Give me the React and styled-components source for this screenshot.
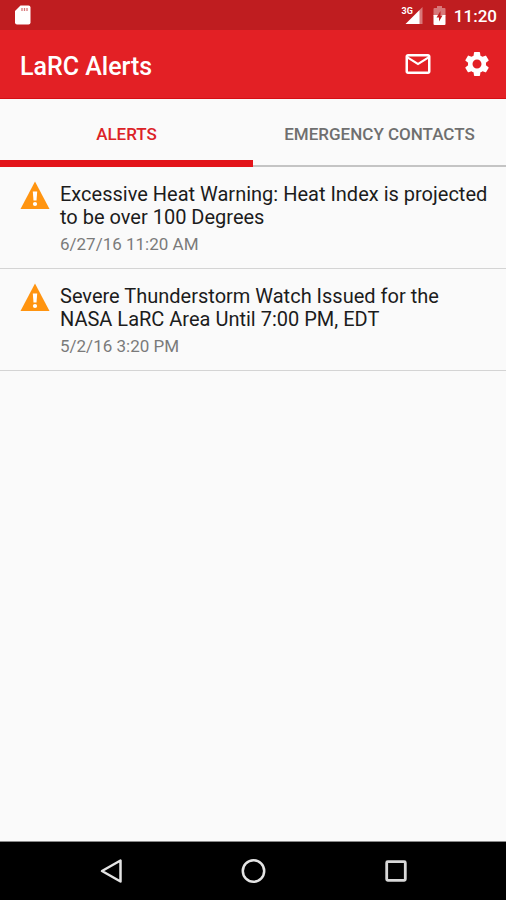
import React, { useState } from "react";
import styled, { createGlobalStyle } from "styled-components";
import { MdMailOutline, MdSettings } from "react-icons/md";

const GlobalStyle = createGlobalStyle`
  * {
    box-sizing: border-box;
  }
  body {
    margin: 0;
    background: #fafafa;
    font-family: Roboto, "Liberation Sans", sans-serif;
  }
  button {
    padding: 0;
    border: 0;
    background: none;
    font-family: inherit;
    cursor: pointer;
  }
  svg {
    display: block;
  }
`;

const Screen = styled.div`
  display: flex;
  flex-direction: column;
  min-height: 100vh;
`;

const StatusBar = styled.div`
  display: flex;
  align-items: center;
  justify-content: space-between;
  height: 30px;
  padding: 0 9px 0 14px;
  background: #bf1d20;
  color: #fff;
`;

const StatusIcons = styled.div`
  display: flex;
  align-items: center;
`;

const Clock = styled.span`
  margin-left: 8px;
  padding-top: 2px;
  font-size: 17px;
  font-weight: 500;
  line-height: 22px;
`;

const Network = styled.div`
  display: flex;
  align-items: flex-start;
  margin-right: 10px;
  span {
    margin-right: -8px;
    font-size: 9px;
    font-weight: 700;
    line-height: 10px;
  }
`;

const AppBar = styled.header`
  display: flex;
  align-items: center;
  justify-content: space-between;
  height: 69px;
  padding: 0 14px 0 20px;
  border-bottom: 1px solid #d50f14;
  background: #e32025;
  color: #fff;
  h1 {
    margin: 0;
    padding-top: 5px;
    font-size: 25px;
    font-weight: 500;
    line-height: 28px;
  }
`;

const Actions = styled.div`
  display: flex;
  gap: 29px;
`;

const IconButton = styled.button`
  color: #fff;
  font-size: 30px;
`;

const Tabs = styled.div`
  display: flex;
  height: 68px;
  box-shadow: inset 0 -2px #c4c4c4;
`;

const Tab = styled.button`
  flex: 1 1 0;
  padding-top: 8px;
  border-bottom: 7px solid ${(props) => (props.$active ? "#e3141a" : "transparent")};
  color: ${(props) => (props.$active ? "#dc2227" : "#6f6f6f")};
  font-size: 17px;
  font-weight: 500;
  line-height: 20px;
`;

const List = styled.ul`
  flex: 1;
  margin: 0;
  padding: 0;
  list-style: none;
`;

const Item = styled.li`
  display: flex;
  gap: 10px;
  padding: 14px 12px 13px 20px;
  border-bottom: 1px solid #d4d4d4;
  svg {
    flex: none;
  }
  h2 {
    margin: 2px 0 4px;
    color: #1c1c1c;
    font-size: 20px;
    font-weight: 400;
    line-height: 23px;
  }
  time {
    display: block;
    color: #7a7a7a;
    font-size: 17px;
    line-height: 22px;
  }
`;

const NavBar = styled.nav`
  display: flex;
  justify-content: center;
  gap: 112px;
  height: 59px;
  border-top: 1px solid #8a8a8a;
  background: #000;
`;

const NavButton = styled.button`
  width: 30px;
`;

const alerts = [
  {
    title: "Excessive Heat Warning: Heat Index is projected to be over 100 Degrees",
    date: "6/27/16 11:20 AM",
  },
  {
    title: "Severe Thunderstorm Watch Issued for the NASA LaRC Area Until 7:00 PM, EDT",
    date: "5/2/16 3:20 PM",
  },
];

function SdCardIcon() {
  return (
    <svg width="17" height="20" viewBox="0 0 17 20">
      <path
        d="M6.5 .5H14.500Q16.500 .5 16.500 2.500V17.500Q16.500 19.500 14.500 19.500H3Q1 19.500 1 17.500V6Z"
        fill="#fff"
      />
      <path d="M8 3v3M10.500 3v3M13 3v3" stroke="#bf1d20" strokeWidth="1.300" opacity="0.6" />
    </svg>
  );
}

function SignalIcon() {
  return (
    <svg width="18" height="18" viewBox="0 0 18 18">
      <path d="M17.500 1V18H14V4.500Z" fill="#fff" opacity="0.4" />
      <path d="M14.500 4V18H.5Z" fill="#fff" />
    </svg>
  );
}

function BatteryIcon() {
  return (
    <svg width="13" height="19" viewBox="0 0 13 19">
      <path d="M4 0H9V2H11.500Q12.500 2 12.500 3V10H.5V3Q.5 2 1.500 2H4Z" fill="#fff" opacity="0.4" />
      <path d="M.5 9H12.500V18Q12.500 19 11.500 19H1.500Q.5 19 .5 18Z" fill="#fff" />
      <path d="M7.500 5L3.500 11.500H6V15.500L9.500 9.500H7.500Z" fill="#bf1d20" />
    </svg>
  );
}

function WarningIcon() {
  return (
    <svg width="30" height="29" viewBox="0 0 30 29" role="img" aria-label="Warning">
      <path d="M15 .5L29.500 28H.5Z" fill="#ff9410" />
      <path d="M12.800 10.500H17.200L16.500 19.500H13.500Z" fill="#fff" />
      <circle cx="15" cy="23" r="2.100" fill="#fff" />
    </svg>
  );
}

function App() {
  const [tab, setTab] = useState("alerts");

  return (
    <Screen>
      <GlobalStyle />
      <StatusBar>
        <SdCardIcon />
        <StatusIcons>
          <Network>
            <span>3G</span>
            <SignalIcon />
          </Network>
          <BatteryIcon />
          <Clock>11:20</Clock>
        </StatusIcons>
      </StatusBar>

      <AppBar>
        <h1>LaRC Alerts</h1>
        <Actions>
          <IconButton aria-label="Messages">
            <MdMailOutline />
          </IconButton>
          <IconButton aria-label="Settings">
            <MdSettings />
          </IconButton>
        </Actions>
      </AppBar>

      <Tabs role="tablist">
        <Tab
          role="tab"
          aria-selected={tab === "alerts"}
          $active={tab === "alerts"}
          onClick={() => setTab("alerts")}
        >
          ALERTS
        </Tab>
        <Tab
          role="tab"
          aria-selected={tab === "contacts"}
          $active={tab === "contacts"}
          onClick={() => setTab("contacts")}
        >
          EMERGENCY CONTACTS
        </Tab>
      </Tabs>

      <List>
        {tab === "alerts" &&
          alerts.map((alert) => (
            <Item key={alert.date}>
              <WarningIcon />
              <div>
                <h2>{alert.title}</h2>
                <time>{alert.date}</time>
              </div>
            </Item>
          ))}
      </List>

      <NavBar>
        <NavButton aria-label="Back">
          <svg width="30" height="30" viewBox="0 0 30 30">
            <path d="M24.500 4.500V25.500L6 15Z" fill="none" stroke="#e4e4e4" strokeWidth="2.500" strokeLinejoin="round" />
          </svg>
        </NavButton>
        <NavButton aria-label="Home">
          <svg width="30" height="30" viewBox="0 0 30 30">
            <circle cx="15.500" cy="15" r="10.700" fill="none" stroke="#e4e4e4" strokeWidth="2.500" />
          </svg>
        </NavButton>
        <NavButton aria-label="Recent apps">
          <svg width="30" height="30" viewBox="0 0 30 30">
            <rect x="6.700" y="5.700" width="18.600" height="18.600" rx="1" fill="none" stroke="#d8d8d8" strokeWidth="2.800" />
          </svg>
        </NavButton>
      </NavBar>
    </Screen>
  );
}

export default App;
